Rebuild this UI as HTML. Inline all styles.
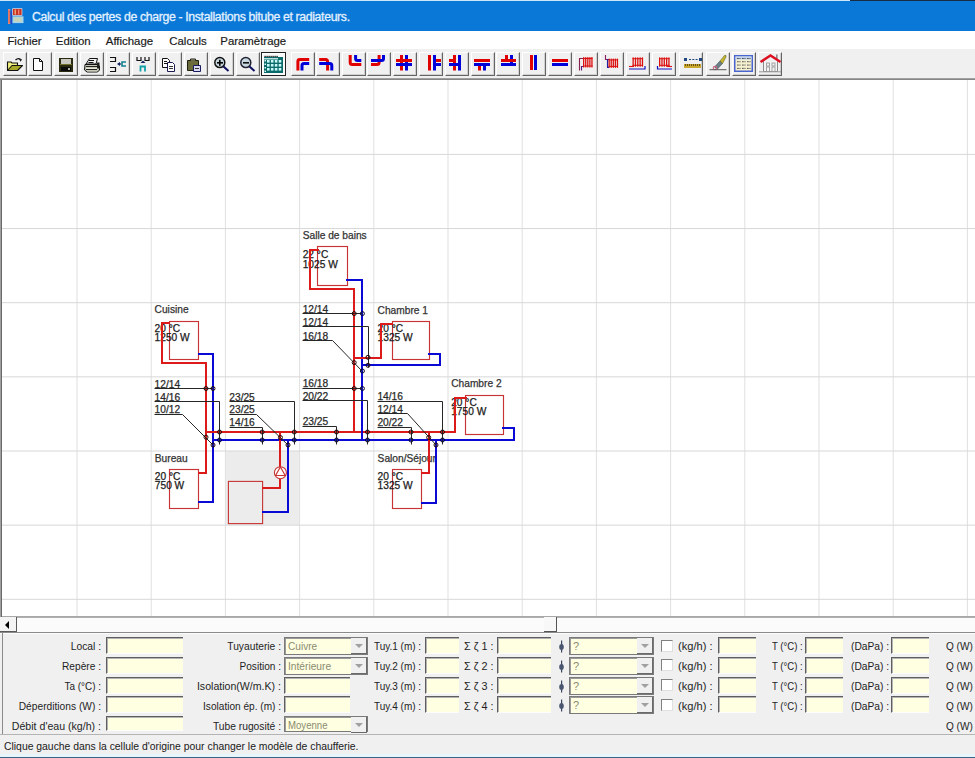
<!DOCTYPE html><html><head><meta charset="utf-8"><title>Calcul</title><style>
*{margin:0;padding:0;box-sizing:border-box}
html,body{width:975px;height:758px;overflow:hidden}body{position:relative;background:#f0f0f0;font-family:"Liberation Sans", sans-serif;color:#1e1e1e}
.a{position:absolute}
.t{position:absolute;white-space:nowrap;line-height:1}
.btn{position:absolute;top:52px;width:24px;height:24px;background:#f0f0f0;border-top:1px solid #fff;border-left:1px solid #fff;border-right:1px solid #646464;border-bottom:1px solid #646464;box-shadow:inset -1px -1px 0 #d0d0d0}
.inp{position:absolute;height:17px;background:#ffffe1;border-top:1px solid #5e5e5e;border-left:1px solid #5e5e5e;border-bottom:1px solid #fcfcfc;box-shadow:inset 1px 1px 0 #b4b4b4}
.cmb{position:absolute;height:18px;background:#ffffe1;border:1px solid #7a7a7a;box-shadow:inset 1px 1px 0 #9a9a9a}
.cmb i{position:absolute;right:0;top:0;width:16px;height:16px;background:#f0f0f0;border-bottom:1px solid #6a6a6a;border-right:1px solid #6a6a6a}
.cmb i:after{content:"";position:absolute;left:4px;top:6px;border-left:4px solid transparent;border-right:4px solid transparent;border-top:4px solid #a0a0a0}
.cmb b{position:absolute;left:3px;top:3px;font-weight:normal;font-size:11px;color:#8a8a70;line-height:1}
.lb{position:absolute;font-size:11px;line-height:1;white-space:nowrap;color:#1e1e1e}
.lr{text-align:right}
.chk{position:absolute;width:12px;height:12px;background:#fff;border-top:1px solid #808080;border-left:1px solid #808080;border-right:1px solid #e0e0e0;border-bottom:1px solid #e0e0e0}
</style></head><body>
<div class="a" style="left:0;top:0;width:975px;height:31px;background:#0a78d7"></div>
<div class="a" style="left:0;top:0;width:850px;height:1px;background:#cfe6f7"></div>
<div class="a" style="left:850px;top:0;width:125px;height:1px;background:#1a2c40"></div>
<svg class="a" style="left:0;top:0" width="30" height="30" viewBox="0 0 30 30">
<rect x="8" y="9" width="2.2" height="15" fill="#e88878"/><rect x="8.6" y="10" width="1" height="13" fill="#d04838" opacity="0.6"/>
<rect x="10.6" y="11" width="1.4" height="13" fill="#2848c8"/>
<rect x="12.3" y="8.3" width="10" height="7.4" fill="#f0d8d8"/>
<rect x="13" y="9" width="8.6" height="6" fill="#c83424"/><rect x="14.6" y="9.5" width="1.3" height="5" fill="#f4b080"/><rect x="18" y="9.5" width="1.3" height="5" fill="#f08070"/>
<rect x="12.5" y="16.3" width="11" height="6.8" fill="#a8d4e8"/><rect x="14" y="17.4" width="7.5" height="4.2" fill="#c8d4b8"/>
</svg>
<div class="t" style="left:32px;top:11px;font-size:12.3px;letter-spacing:-0.36px;-webkit-text-stroke:0.3px #e2f1ff;color:#e2f1ff">Calcul des pertes de charge - Installations bitube et radiateurs.</div>
<div class="a" style="left:0;top:31px;width:975px;height:18px;background:#fff"></div>
<div class="t" style="left:7.4px;top:36px;font-size:11.4px;-webkit-text-stroke:0.2px #1a1a1a;color:#1a1a1a">Fichier</div>
<div class="t" style="left:55.8px;top:36px;font-size:11.4px;-webkit-text-stroke:0.2px #1a1a1a;color:#1a1a1a">Edition</div>
<div class="t" style="left:105.8px;top:36px;font-size:11.4px;-webkit-text-stroke:0.2px #1a1a1a;color:#1a1a1a">Affichage</div>
<div class="t" style="left:169.3px;top:36px;font-size:11.4px;-webkit-text-stroke:0.2px #1a1a1a;color:#1a1a1a">Calculs</div>
<div class="t" style="left:220.3px;top:36px;font-size:11.4px;-webkit-text-stroke:0.2px #1a1a1a;color:#1a1a1a">Paramètrage</div>
<div class="a" style="left:0;top:49px;width:975px;height:29px;background:#f0f0f0"></div>
<div class="a" style="left:0;top:78px;width:975px;height:1px;background:#a0a0a0"></div>
<div class="a" style="left:0;top:79px;width:975px;height:1px;background:#868686"></div>
<div class="btn" style="left:3px"></div>
<div class="btn" style="left:28px"></div>
<div class="btn" style="left:54px"></div>
<div class="btn" style="left:80px"></div>
<div class="btn" style="left:105.5px"></div>
<div class="btn" style="left:131.5px"></div>
<div class="btn" style="left:157.5px"></div>
<div class="btn" style="left:184px"></div>
<div class="btn" style="left:210px"></div>
<div class="btn" style="left:236px"></div>
<div class="a" style="left:261px;top:52px;width:25px;height:24px;background:#fafafa;border:1px solid #222;box-shadow:inset 1px 1px 0 #fff"></div>
<div class="btn" style="left:291px"></div>
<div class="btn" style="left:316px"></div>
<div class="btn" style="left:342px"></div>
<div class="btn" style="left:367px"></div>
<div class="btn" style="left:393px"></div>
<div class="btn" style="left:419px"></div>
<div class="btn" style="left:444.5px"></div>
<div class="btn" style="left:470.5px"></div>
<div class="btn" style="left:496px"></div>
<div class="btn" style="left:522px"></div>
<div class="btn" style="left:548px"></div>
<div class="btn" style="left:574px"></div>
<div class="btn" style="left:600px"></div>
<div class="btn" style="left:625.5px"></div>
<div class="btn" style="left:651.5px"></div>
<div class="btn" style="left:679px"></div>
<div class="btn" style="left:706px"></div>
<div class="btn" style="left:732px"></div>
<div class="btn" style="left:758px"></div>
<svg class="a" style="left:0;top:0" width="975" height="80" viewBox="0 0 975 80"><path d="M7.5,70.5 V62 h3.5 l1,1 h5.5 v2.5" fill="#f0f080" stroke="#111" stroke-width="1.1"/><path d="M7.5,70.5 L12,65.5 H22.5 L17.5,70.5 Z" fill="#a8a828" stroke="#111" stroke-width="1.1" stroke-linejoin="round"/><path d="M15.5,60 q2.5,-2.5 5,-0.8" fill="none" stroke="#111" stroke-width="1.2"/><path d="M19,59 l3,0.3 l-1.3,2.4 z" fill="#111"/><path d="M33.5,58.5 h6 l3,3 v9 h-9 z" fill="#fff" stroke="#111" stroke-width="1"/><path d="M39.5,58.5 v3 h3" fill="none" stroke="#111" stroke-width="1"/><rect x="59" y="58" width="14" height="14" fill="#2a2a10"/><rect x="61" y="59" width="10" height="5" fill="#c8c8c0"/><rect x="60" y="64" width="12" height="1" fill="#70702a"/><rect x="61" y="67" width="10" height="4" fill="#0a0a0a"/><rect x="68" y="68" width="2" height="2" fill="#b0b0a0"/><path d="M89.5,58.5 H97.5 L96,64 H86 Z" fill="#f4f4f4" stroke="#111" stroke-width="1"/><rect x="89" y="60" width="5" height="1" fill="#111"/><rect x="88.5" y="62" width="5" height="1" fill="#111"/><path d="M85,64.5 H97 L99.5,66 V70 L97.5,72 H87 L84.5,70 Z" fill="#c8c8b8" stroke="#111" stroke-width="1"/><rect x="86" y="66" width="11" height="1.2" fill="#202020"/><rect x="86" y="67.5" width="11" height="1.5" fill="#e8e8d8"/><rect x="86" y="69" width="11" height="1" fill="#202020"/><rect x="87" y="70.5" width="10" height="1" fill="#d0d0c0"/><rect x="97" y="62.5" width="2.5" height="6" fill="#202020"/><path d="M110,57.5 h5.5 v4 h-5.5 M110,67.5 h5.5 v4 h-5.5" fill="none" stroke="#111" stroke-width="1.2"/><path d="M117,64 l3,-2 v4 z" fill="#102060"/><rect x="119" y="63.4" width="2" height="1.2" fill="#102060"/><path d="M126,62 h-4 v4 h4" fill="none" stroke="#108090" stroke-width="1.6"/><path d="M137,57 v3.5 h4 v-3.5 M145,57 v3.5 h4 v-3.5" fill="none" stroke="#111" stroke-width="1.2"/><path d="M143,60.5 l2.5,2.5 h-5 z" fill="#102060"/><path d="M140.5,71.5 v-5 h4.5 v5" fill="none" stroke="#10a0a8" stroke-width="1.8"/><path d="M162.5,58.5 h5 l2,2 v7 h-7 z" fill="#fff" stroke="#111" stroke-width="1"/><path d="M167.5,62.5 h5 l2,2 v7 h-7 z" fill="#fff" stroke="#1a1a50" stroke-width="1"/><rect x="164" y="61" width="3" height="1" fill="#111"/><rect x="164" y="63" width="4" height="1" fill="#111"/><rect x="169" y="66" width="4" height="1" fill="#333"/><rect x="169" y="68" width="4" height="1" fill="#333"/><path d="M187.5,60.5 h11 v10 h-11 z" fill="#6a6a3a" stroke="#202010" stroke-width="1"/><path d="M190.5,60.5 v-1.5 h5 v1.5" fill="#b0b090" stroke="#202010" stroke-width="1"/><path d="M193.5,65.5 h7 v6 h-7 z" fill="#d8d8f0" stroke="#1a1a60" stroke-width="1"/><rect x="195" y="68" width="4" height="1" fill="#333"/><circle cx="219.8" cy="62.6" r="5" fill="#c8d8e0" stroke="#111" stroke-width="1.5"/><path d="M223.5,66.5 l5,4.5" stroke="#101060" stroke-width="2"/><rect x="217" y="62" width="6" height="1.6" fill="#000"/><rect x="219" y="59.8" width="1.6" height="6" fill="#000"/><circle cx="245.8" cy="62.6" r="5" fill="#c8d8e0" stroke="#223" stroke-width="1.5"/><path d="M249.5,66.5 l5,4.5" stroke="#101060" stroke-width="2"/><rect x="243" y="62" width="6" height="1.6" fill="#111"/><rect x="264" y="57" width="19" height="16" fill="#0a6a6a"/><rect x="264" y="55.5" width="15" height="1.2" fill="#fff"/><rect x="264.5" y="55.8" width="1.2" height="1.2" fill="#000"/><rect x="266.5" y="55.8" width="1.2" height="1.2" fill="#000"/><rect x="268.5" y="55.8" width="1.2" height="1.2" fill="#000"/><rect x="270.5" y="55.8" width="1.2" height="1.2" fill="#000"/><rect x="272.5" y="55.8" width="1.2" height="1.2" fill="#000"/><rect x="274.5" y="55.8" width="1.2" height="1.2" fill="#000"/><rect x="276.5" y="55.8" width="1.2" height="1.2" fill="#000"/><rect x="264" y="58" width="14" height="1.5" fill="#b8e0e0"/><rect x="267.0" y="60" width="2.6" height="2.6" fill="#c8fafa"/><rect x="270.9" y="60" width="2.6" height="2.6" fill="#c8fafa"/><rect x="274.8" y="60" width="2.6" height="2.6" fill="#c8fafa"/><rect x="278.7" y="60" width="2.6" height="2.6" fill="#c8fafa"/><rect x="267.0" y="64" width="2.6" height="2.6" fill="#c8fafa"/><rect x="270.9" y="64" width="2.6" height="2.6" fill="#c8fafa"/><rect x="274.8" y="64" width="2.6" height="2.6" fill="#c8fafa"/><rect x="278.7" y="64" width="2.6" height="2.6" fill="#c8fafa"/><rect x="267.0" y="68" width="2.6" height="2.6" fill="#c8fafa"/><rect x="270.9" y="68" width="2.6" height="2.6" fill="#c8fafa"/><rect x="274.8" y="68" width="2.6" height="2.6" fill="#c8fafa"/><rect x="278.7" y="68" width="2.6" height="2.6" fill="#c8fafa"/><rect x="264.5" y="60.0" width="1.5" height="1.5" fill="#e0f8f8"/><rect x="264.5" y="63.5" width="1.5" height="1.5" fill="#e0f8f8"/><rect x="264.5" y="67.0" width="1.5" height="1.5" fill="#e0f8f8"/><rect x="264.5" y="70.5" width="1.5" height="1.5" fill="#e0f8f8"/><path d="M297.9,70.5 V61.5 Q297.9,59.6 299.8,59.6 H309.2" fill="none" stroke="#e00000" stroke-width="3" stroke-linejoin="miter"/><path d="M302,70.5 V65.5 Q302,63.5 304,63.5 H309.2" fill="none" stroke="#0000d8" stroke-width="3" stroke-linejoin="miter"/><path d="M319.2,59.6 H325.5 Q327.6,59.6 327.6,61.7 V70.5" fill="none" stroke="#e00000" stroke-width="3" stroke-linejoin="miter"/><path d="M319.2,63.5 H329.8 Q331.8,63.5 331.8,65.5 V70.5" fill="none" stroke="#0000d8" stroke-width="3" stroke-linejoin="miter"/><path d="M350.2,55 V62.5 Q350.2,64.6 352.3,64.6 H361.3" fill="none" stroke="#e00000" stroke-width="3" stroke-linejoin="miter"/><path d="M355.6,55 V58.5 Q355.6,60.5 357.6,60.5 H361.3" fill="none" stroke="#0000d8" stroke-width="3" stroke-linejoin="miter"/><path d="M371,64.6 H377 Q379.1,64.6 379.1,62.5 V55" fill="none" stroke="#e00000" stroke-width="3" stroke-linejoin="miter"/><path d="M371,60.5 H381.5 Q383.5,60.5 383.5,58.5 V55" fill="none" stroke="#0000d8" stroke-width="3" stroke-linejoin="miter"/><path d="M401.5,55 V70.5" fill="none" stroke="#e00000" stroke-width="3" stroke-linejoin="miter"/><path d="M406.5,55 V70.5" fill="none" stroke="#0000d8" stroke-width="3" stroke-linejoin="miter"/><path d="M396,60.5 H412" fill="none" stroke="#e00000" stroke-width="3" stroke-linejoin="miter"/><path d="M396,64.5 H412" fill="none" stroke="#0000d8" stroke-width="3" stroke-linejoin="miter"/><path d="M429.5,55 V70.5" fill="none" stroke="#e00000" stroke-width="3" stroke-linejoin="miter"/><path d="M434.5,55 V70.5" fill="none" stroke="#0000d8" stroke-width="3" stroke-linejoin="miter"/><path d="M436,60.5 H441" fill="none" stroke="#e00000" stroke-width="3" stroke-linejoin="miter"/><path d="M436,64.5 H441" fill="none" stroke="#0000d8" stroke-width="3" stroke-linejoin="miter"/><path d="M449,60.5 H455" fill="none" stroke="#e00000" stroke-width="3" stroke-linejoin="miter"/><path d="M454.5,55 V70.5" fill="none" stroke="#e00000" stroke-width="3" stroke-linejoin="miter"/><path d="M449,64.5 H460" fill="none" stroke="#0000d8" stroke-width="3" stroke-linejoin="miter"/><path d="M459.5,55 V70.5" fill="none" stroke="#0000d8" stroke-width="3" stroke-linejoin="miter"/><path d="M474,60.5 H490" fill="none" stroke="#e00000" stroke-width="3" stroke-linejoin="miter"/><path d="M474,64.5 H490" fill="none" stroke="#0000d8" stroke-width="3" stroke-linejoin="miter"/><path d="M479.5,66 V70.5" fill="none" stroke="#e00000" stroke-width="3" stroke-linejoin="miter"/><path d="M484.5,66 V70.5" fill="none" stroke="#0000d8" stroke-width="3" stroke-linejoin="miter"/><path d="M506.5,55 V59" fill="none" stroke="#e00000" stroke-width="3" stroke-linejoin="miter"/><path d="M511.5,55 V63" fill="none" stroke="#0000d8" stroke-width="3" stroke-linejoin="miter"/><path d="M501,60.5 H516" fill="none" stroke="#e00000" stroke-width="3" stroke-linejoin="miter"/><path d="M501,64.5 H516" fill="none" stroke="#0000d8" stroke-width="3" stroke-linejoin="miter"/><path d="M531.5,55 V70" fill="none" stroke="#e00000" stroke-width="3" stroke-linejoin="miter"/><path d="M535.5,55 V70" fill="none" stroke="#0000d8" stroke-width="3" stroke-linejoin="miter"/><path d="M552,60.5 H568" fill="none" stroke="#e00000" stroke-width="3" stroke-linejoin="miter"/><path d="M552,64.5 H568" fill="none" stroke="#0000d8" stroke-width="3" stroke-linejoin="miter"/><rect x="583.00" y="57" width="1.3" height="10.5" rx="0.6" fill="#dc1010"/><rect x="585.08" y="57" width="1.3" height="10.5" rx="0.6" fill="#dc1010"/><rect x="587.15" y="57" width="1.3" height="10.5" rx="0.6" fill="#dc1010"/><rect x="589.23" y="57" width="1.3" height="10.5" rx="0.6" fill="#dc1010"/><rect x="591.30" y="57" width="1.3" height="10.5" rx="0.6" fill="#dc1010"/><rect x="583" y="58" width="9.5" height="1" fill="#dc1010"/><rect x="583" y="65.5" width="9.5" height="1" fill="#dc1010"/><path d="M583,58.5 H579.5 V70.5" fill="none" stroke="#8a2050" stroke-width="1.1"/><path d="M583,66.5 H581.5 V70.5" fill="none" stroke="#502080" stroke-width="1.1"/><rect x="608.50" y="58.4" width="1.3" height="9.5" rx="0.6" fill="#dc1010"/><rect x="610.58" y="58.4" width="1.3" height="9.5" rx="0.6" fill="#dc1010"/><rect x="612.65" y="58.4" width="1.3" height="9.5" rx="0.6" fill="#dc1010"/><rect x="614.73" y="58.4" width="1.3" height="9.5" rx="0.6" fill="#dc1010"/><rect x="616.80" y="58.4" width="1.3" height="9.5" rx="0.6" fill="#dc1010"/><rect x="608.5" y="59.4" width="9.5" height="1" fill="#dc1010"/><rect x="608.5" y="65.9" width="9.5" height="1" fill="#dc1010"/><path d="M605.5,55 V59.5 H609" fill="none" stroke="#8a2060" stroke-width="1.1"/><path d="M607.5,59 V67.5 H609" fill="none" stroke="#2020a0" stroke-width="1.1"/><rect x="632.50" y="57.2" width="1.3" height="9.6" rx="0.6" fill="#dc1010"/><rect x="634.83" y="57.2" width="1.3" height="9.6" rx="0.6" fill="#dc1010"/><rect x="637.15" y="57.2" width="1.3" height="9.6" rx="0.6" fill="#dc1010"/><rect x="639.48" y="57.2" width="1.3" height="9.6" rx="0.6" fill="#dc1010"/><rect x="641.80" y="57.2" width="1.3" height="9.6" rx="0.6" fill="#dc1010"/><rect x="632.5" y="58.2" width="10.5" height="1" fill="#dc1010"/><rect x="632.5" y="64.8" width="10.5" height="1" fill="#dc1010"/><path d="M629,66.5 H634" stroke="#dc1010" stroke-width="1.1" fill="none"/><path d="M629,69 H645 V66" stroke="#1010c0" stroke-width="1.2" fill="none"/><rect x="659.00" y="57.2" width="1.3" height="9.6" rx="0.6" fill="#dc1010"/><rect x="661.33" y="57.2" width="1.3" height="9.6" rx="0.6" fill="#dc1010"/><rect x="663.65" y="57.2" width="1.3" height="9.6" rx="0.6" fill="#dc1010"/><rect x="665.98" y="57.2" width="1.3" height="9.6" rx="0.6" fill="#dc1010"/><rect x="668.30" y="57.2" width="1.3" height="9.6" rx="0.6" fill="#dc1010"/><rect x="659" y="58.2" width="10.5" height="1" fill="#dc1010"/><rect x="659" y="64.8" width="10.5" height="1" fill="#dc1010"/><path d="M667,66.5 H672" stroke="#dc1010" stroke-width="1.1" fill="none"/><path d="M657.5,66 V69 H672" stroke="#1010c0" stroke-width="1.2" fill="none"/><rect x="684" y="58" width="3" height="3" fill="#204880"/><rect x="699" y="58" width="3" height="3" fill="#204880"/><rect x="689.0" y="59" width="2" height="1" fill="#204880"/><rect x="692.3" y="59" width="2" height="1" fill="#204880"/><rect x="695.6" y="59" width="2" height="1" fill="#204880"/><rect x="684" y="64" width="17" height="4" fill="#c8a830"/><rect x="685" y="64" width="1" height="2" fill="#6a5010"/><rect x="687" y="64" width="1" height="2" fill="#6a5010"/><rect x="689" y="64" width="1" height="2" fill="#6a5010"/><rect x="691" y="64" width="1" height="2" fill="#6a5010"/><rect x="693" y="64" width="1" height="2" fill="#6a5010"/><rect x="695" y="64" width="1" height="2" fill="#6a5010"/><rect x="697" y="64" width="1" height="2" fill="#6a5010"/><rect x="699" y="64" width="1" height="2" fill="#6a5010"/><path d="M714.5,67 L720,61 L722.5,63.5 L717,69.5 z" fill="#6a8088" stroke="#404848" stroke-width="0.6"/><path d="M720,61 L724.5,55.5 L726,55.5 L726,57 L722.5,63.5 z" fill="#c8b830" stroke="#606020" stroke-width="0.6"/><circle cx="715" cy="68" r="1.8" fill="none" stroke="#d06080" stroke-width="1.1"/><rect x="709.5" y="69.2" width="17" height="1" fill="#585858"/><rect x="734" y="55" width="19" height="17" fill="#4a64d0"/><rect x="735.5" y="56.5" width="16" height="14" fill="#f4f0d0"/><rect x="735.5" y="56.5" width="16" height="3" fill="#c0d4f0"/><rect x="737.0" y="58.0" width="0.9" height="0.9" fill="#333"/><rect x="738.3" y="58.0" width="0.9" height="0.9" fill="#333"/><rect x="739.6" y="58.0" width="0.9" height="0.9" fill="#333"/><rect x="742.0" y="58.0" width="0.9" height="0.9" fill="#333"/><rect x="743.3" y="58.0" width="0.9" height="0.9" fill="#333"/><rect x="744.6" y="58.0" width="0.9" height="0.9" fill="#333"/><rect x="747.0" y="58.0" width="0.9" height="0.9" fill="#333"/><rect x="748.3" y="58.0" width="0.9" height="0.9" fill="#333"/><rect x="749.6" y="58.0" width="0.9" height="0.9" fill="#333"/><rect x="737.0" y="61.3" width="0.9" height="0.9" fill="#333"/><rect x="738.3" y="61.3" width="0.9" height="0.9" fill="#333"/><rect x="739.6" y="61.3" width="0.9" height="0.9" fill="#333"/><rect x="742.0" y="61.3" width="0.9" height="0.9" fill="#333"/><rect x="743.3" y="61.3" width="0.9" height="0.9" fill="#333"/><rect x="744.6" y="61.3" width="0.9" height="0.9" fill="#333"/><rect x="747.0" y="61.3" width="0.9" height="0.9" fill="#333"/><rect x="748.3" y="61.3" width="0.9" height="0.9" fill="#333"/><rect x="749.6" y="61.3" width="0.9" height="0.9" fill="#333"/><rect x="737.0" y="64.6" width="0.9" height="0.9" fill="#333"/><rect x="738.3" y="64.6" width="0.9" height="0.9" fill="#333"/><rect x="739.6" y="64.6" width="0.9" height="0.9" fill="#333"/><rect x="742.0" y="64.6" width="0.9" height="0.9" fill="#333"/><rect x="743.3" y="64.6" width="0.9" height="0.9" fill="#333"/><rect x="744.6" y="64.6" width="0.9" height="0.9" fill="#333"/><rect x="747.0" y="64.6" width="0.9" height="0.9" fill="#333"/><rect x="748.3" y="64.6" width="0.9" height="0.9" fill="#333"/><rect x="749.6" y="64.6" width="0.9" height="0.9" fill="#333"/><rect x="737.0" y="67.9" width="0.9" height="0.9" fill="#333"/><rect x="738.3" y="67.9" width="0.9" height="0.9" fill="#333"/><rect x="739.6" y="67.9" width="0.9" height="0.9" fill="#333"/><rect x="742.0" y="67.9" width="0.9" height="0.9" fill="#333"/><rect x="743.3" y="67.9" width="0.9" height="0.9" fill="#333"/><rect x="744.6" y="67.9" width="0.9" height="0.9" fill="#333"/><rect x="747.0" y="67.9" width="0.9" height="0.9" fill="#333"/><rect x="748.3" y="67.9" width="0.9" height="0.9" fill="#333"/><rect x="749.6" y="67.9" width="0.9" height="0.9" fill="#333"/><path d="M763.5,61 V71.5 H777.5 V61" fill="#f4f4f4" stroke="#8a8a8a" stroke-width="1"/><rect x="776" y="54.5" width="1.6" height="4.5" fill="#8a8a8a"/><path d="M760.5,62 L770.5,55.5 L780.5,62" fill="none" stroke="#dc1020" stroke-width="2.4"/><rect x="766.5" y="63.0" width="3" height="3" fill="none" stroke="#9a9a9a" stroke-width="0.9"/><rect x="772.0" y="63.0" width="3" height="3" fill="none" stroke="#9a9a9a" stroke-width="0.9"/><rect x="766.5" y="67.0" width="3" height="4.5" fill="none" stroke="#9a9a9a" stroke-width="0.9"/><rect x="772.0" y="67.0" width="3" height="4.5" fill="none" stroke="#9a9a9a" stroke-width="0.9"/><rect x="759" y="71.3" width="22" height="1" fill="#9a9a9a"/></svg>
<div class="a" style="left:0;top:80px;width:1px;height:537px;background:#a0a0a0"></div>
<div class="a" style="left:1px;top:80px;width:1px;height:537px;background:#6a6a6a"></div>
<div class="a" style="left:2px;top:80px;width:973px;height:536px;background:#fff"></div>
<div class="a" style="left:2px;top:616px;width:973px;height:1px;background:#a8a8a8"></div>
<svg class="a" style="left:0;top:0" width="975" height="617" viewBox="0 0 975 617"><defs><clipPath id="cv"><rect x="2" y="80" width="973" height="536"/></clipPath></defs><g clip-path="url(#cv)" font-family="Liberation Sans, sans-serif"><rect x="225.4" y="451" width="74.2" height="74.2" fill="#ececec"/><rect x="76.50" y="80" width="1" height="536" fill="#e0e0e0"/><rect x="150.70" y="80" width="1" height="536" fill="#e0e0e0"/><rect x="224.90" y="80" width="1" height="536" fill="#e0e0e0"/><rect x="299.10" y="80" width="1" height="536" fill="#e0e0e0"/><rect x="373.30" y="80" width="1" height="536" fill="#e0e0e0"/><rect x="447.50" y="80" width="1" height="536" fill="#e0e0e0"/><rect x="521.70" y="80" width="1" height="536" fill="#e0e0e0"/><rect x="595.90" y="80" width="1" height="536" fill="#e0e0e0"/><rect x="670.10" y="80" width="1" height="536" fill="#e0e0e0"/><rect x="744.30" y="80" width="1" height="536" fill="#e0e0e0"/><rect x="818.50" y="80" width="1" height="536" fill="#e0e0e0"/><rect x="892.70" y="80" width="1" height="536" fill="#e0e0e0"/><rect x="966.90" y="80" width="1" height="536" fill="#e0e0e0"/><rect x="2" y="153.90" width="973" height="1" fill="#d8d8d8"/><rect x="2" y="228.05" width="973" height="1" fill="#d8d8d8"/><rect x="2" y="302.20" width="973" height="1" fill="#d8d8d8"/><rect x="2" y="376.35" width="973" height="1" fill="#d8d8d8"/><rect x="2" y="450.50" width="973" height="1" fill="#d8d8d8"/><rect x="2" y="524.65" width="973" height="1" fill="#d8d8d8"/><rect x="2" y="598.80" width="973" height="1" fill="#d8d8d8"/><rect x="228.4" y="481.4" width="34.2" height="42.2" fill="#ececec" stroke="#c83434" stroke-width="1.1"/><rect x="169.5" y="321.5" width="29.0" height="38.0" fill="none" stroke="#c83434" stroke-width="1.15"/><rect x="169.5" y="469.5" width="29.0" height="39.0" fill="none" stroke="#c83434" stroke-width="1.15"/><rect x="317.5" y="246.5" width="30.0" height="39.0" fill="none" stroke="#c83434" stroke-width="1.15"/><rect x="392.5" y="321.5" width="37.0" height="38.0" fill="none" stroke="#c83434" stroke-width="1.15"/><rect x="465.5" y="395.5" width="38.0" height="39.0" fill="none" stroke="#c83434" stroke-width="1.15"/><rect x="392.5" y="469.5" width="29.0" height="39.0" fill="none" stroke="#c83434" stroke-width="1.15"/><text x="154.6" y="313.3" font-size="10.2" fill="#333" stroke="#333" stroke-width="0.25">Cuisine</text><text x="154.6" y="331.8" font-size="10.2" fill="#1a1a1a" stroke="#1a1a1a" stroke-width="0.25">20 °C</text><text x="154.6" y="341.1" font-size="10.2" fill="#1a1a1a" stroke="#1a1a1a" stroke-width="0.25">1250 W</text><text x="154.8" y="461.9" font-size="10.2" fill="#333" stroke="#333" stroke-width="0.25">Bureau</text><text x="154.8" y="479.8" font-size="10.2" fill="#1a1a1a" stroke="#1a1a1a" stroke-width="0.25">20 °C</text><text x="154.8" y="488.9" font-size="10.2" fill="#1a1a1a" stroke="#1a1a1a" stroke-width="0.25">750 W</text><text x="302.7" y="239.1" font-size="10.2" fill="#333" stroke="#333" stroke-width="0.25">Salle de bains</text><text x="302.7" y="258.3" font-size="10.2" fill="#1a1a1a" stroke="#1a1a1a" stroke-width="0.25">22 °C</text><text x="302.7" y="267.5" font-size="10.2" fill="#1a1a1a" stroke="#1a1a1a" stroke-width="0.25">1025 W</text><text x="377.6" y="313.5" font-size="10.2" fill="#333" stroke="#333" stroke-width="0.25">Chambre 1</text><text x="377.6" y="332.0" font-size="10.2" fill="#1a1a1a" stroke="#1a1a1a" stroke-width="0.25">20 °C</text><text x="377.6" y="341.3" font-size="10.2" fill="#1a1a1a" stroke="#1a1a1a" stroke-width="0.25">1325 W</text><text x="451.2" y="386.9" font-size="10.2" fill="#333" stroke="#333" stroke-width="0.25">Chambre 2</text><text x="451.2" y="405.5" font-size="10.2" fill="#1a1a1a" stroke="#1a1a1a" stroke-width="0.25">20 °C</text><text x="451.2" y="414.7" font-size="10.2" fill="#1a1a1a" stroke="#1a1a1a" stroke-width="0.25">1750 W</text><text x="377.6" y="461.6" font-size="10.2" fill="#333" stroke="#333" stroke-width="0.25">Salon/Séjour</text><text x="377.6" y="479.8" font-size="10.2" fill="#1a1a1a" stroke="#1a1a1a" stroke-width="0.25">20 °C</text><text x="377.6" y="488.7" font-size="10.2" fill="#1a1a1a" stroke="#1a1a1a" stroke-width="0.25">1325 W</text><path d="M169,323 H162 V363 H206 V473 H199" fill="none" stroke="#dc1a1a" stroke-width="2" stroke-linejoin="miter" stroke-linecap="square"/><path d="M199,354 H213 V502 H199" fill="none" stroke="#0a0ad4" stroke-width="2" stroke-linejoin="miter" stroke-linecap="square"/><path d="M206,432 H455 V398 H466" fill="none" stroke="#dc1a1a" stroke-width="2" stroke-linejoin="miter" stroke-linecap="square"/><path d="M213,440 H514 V428 H503" fill="none" stroke="#0a0ad4" stroke-width="2" stroke-linejoin="miter" stroke-linecap="square"/><path d="M263,488 H280 V479" fill="none" stroke="#dc1a1a" stroke-width="2" stroke-linejoin="miter" stroke-linecap="square"/><path d="M280,466 V432" fill="none" stroke="#dc1a1a" stroke-width="2" stroke-linejoin="miter" stroke-linecap="square"/><path d="M263,512 H288 V440" fill="none" stroke="#0a0ad4" stroke-width="2" stroke-linejoin="miter" stroke-linecap="square"/><path d="M318,250 H310 V289 H354 V432" fill="none" stroke="#dc1a1a" stroke-width="2" stroke-linejoin="miter" stroke-linecap="square"/><path d="M347,280 H362 V440" fill="none" stroke="#0a0ad4" stroke-width="2" stroke-linejoin="miter" stroke-linecap="square"/><path d="M392,324 H381 V358 H354" fill="none" stroke="#dc1a1a" stroke-width="2" stroke-linejoin="miter" stroke-linecap="square"/><path d="M429,354 H440 V365 H362" fill="none" stroke="#0a0ad4" stroke-width="2" stroke-linejoin="miter" stroke-linecap="square"/><path d="M422,473 H429 V432" fill="none" stroke="#dc1a1a" stroke-width="2" stroke-linejoin="miter" stroke-linecap="square"/><path d="M422,503 H436 V440" fill="none" stroke="#0a0ad4" stroke-width="2" stroke-linejoin="miter" stroke-linecap="square"/><circle cx="280.4" cy="472.7" r="6" fill="#fff" stroke="#c83434" stroke-width="1.1"/><path d="M280.4,467 L285.2,475.5 H275.6 Z" fill="none" stroke="#c83434" stroke-width="1.15"/><text x="154.6" y="387.6" font-size="10.2" fill="#2a2a2a" stroke="#2a2a2a" stroke-width="0.25">12/14</text><path d="M154.5,388.5 H213.5" fill="none" stroke="#262626" stroke-width="1"/><circle cx="206" cy="388.5" r="2" fill="none" stroke="#200808" stroke-width="1"/><circle cx="213" cy="388.5" r="2" fill="none" stroke="#200808" stroke-width="1"/><text x="154.6" y="400.6" font-size="10.2" fill="#2a2a2a" stroke="#2a2a2a" stroke-width="0.25">14/16</text><path d="M154.5,401.5 H219.5 V444.5" fill="none" stroke="#262626" stroke-width="1"/><circle cx="219.5" cy="432" r="2" fill="none" stroke="#200808" stroke-width="1"/><circle cx="219.5" cy="440" r="2" fill="none" stroke="#080830" stroke-width="1"/><text x="154.6" y="413.3" font-size="10.2" fill="#2a2a2a" stroke="#2a2a2a" stroke-width="0.25">10/12</text><path d="M154.5,414.5 H182.5 L213.5,445.5" fill="none" stroke="#262626" stroke-width="1"/><circle cx="206" cy="437.2" r="2" fill="none" stroke="#200808" stroke-width="1"/><circle cx="213" cy="445" r="2" fill="none" stroke="#200808" stroke-width="1"/><text x="229.3" y="400.6" font-size="10.2" fill="#2a2a2a" stroke="#2a2a2a" stroke-width="0.25">23/25</text><path d="M229.5,401.5 H294.5 V444.5" fill="none" stroke="#262626" stroke-width="1"/><circle cx="294.3" cy="432" r="2" fill="none" stroke="#200808" stroke-width="1"/><circle cx="294.3" cy="440" r="2" fill="none" stroke="#080830" stroke-width="1"/><text x="229.3" y="413.3" font-size="10.2" fill="#2a2a2a" stroke="#2a2a2a" stroke-width="0.25">23/25</text><path d="M229.5,414.5 H256.5 L288.5,445.5" fill="none" stroke="#262626" stroke-width="1"/><circle cx="280.4" cy="437.5" r="2" fill="none" stroke="#200808" stroke-width="1"/><circle cx="288" cy="445" r="2" fill="none" stroke="#200808" stroke-width="1"/><text x="229.3" y="426" font-size="10.2" fill="#2a2a2a" stroke="#2a2a2a" stroke-width="0.25">14/16</text><path d="M229.5,427.5 H262.5 V444.5" fill="none" stroke="#262626" stroke-width="1"/><circle cx="262.2" cy="432" r="2" fill="none" stroke="#200808" stroke-width="1"/><circle cx="262.2" cy="440" r="2" fill="none" stroke="#080830" stroke-width="1"/><text x="302.7" y="313" font-size="10.2" fill="#2a2a2a" stroke="#2a2a2a" stroke-width="0.25">12/14</text><path d="M302.5,313.5 H362.5" fill="none" stroke="#262626" stroke-width="1"/><circle cx="354.2" cy="313.6" r="2" fill="none" stroke="#200808" stroke-width="1"/><circle cx="362.4" cy="313.6" r="2" fill="none" stroke="#080830" stroke-width="1"/><text x="302.7" y="325.6" font-size="10.2" fill="#2a2a2a" stroke="#2a2a2a" stroke-width="0.25">12/14</text><path d="M302.5,326.5 H368.5 V367.5" fill="none" stroke="#262626" stroke-width="1"/><circle cx="368" cy="357.3" r="2" fill="none" stroke="#200808" stroke-width="1"/><circle cx="368" cy="365.3" r="2" fill="none" stroke="#200808" stroke-width="1"/><text x="302.7" y="339.6" font-size="10.2" fill="#2a2a2a" stroke="#2a2a2a" stroke-width="0.25">16/18</text><path d="M302.5,340.5 H332.5 L362.5,371.5" fill="none" stroke="#262626" stroke-width="1"/><circle cx="354.2" cy="362.6" r="2" fill="none" stroke="#200808" stroke-width="1"/><circle cx="362.4" cy="371" r="2" fill="none" stroke="#080830" stroke-width="1"/><text x="302.7" y="387.4" font-size="10.2" fill="#2a2a2a" stroke="#2a2a2a" stroke-width="0.25">16/18</text><path d="M302.5,388.5 H362.5" fill="none" stroke="#262626" stroke-width="1"/><circle cx="354.2" cy="388.5" r="2" fill="none" stroke="#200808" stroke-width="1"/><circle cx="362.4" cy="388.5" r="2" fill="none" stroke="#080830" stroke-width="1"/><text x="302.7" y="400" font-size="10.2" fill="#2a2a2a" stroke="#2a2a2a" stroke-width="0.25">20/22</text><path d="M302.5,400.5 H367.5 V444.5" fill="none" stroke="#262626" stroke-width="1"/><circle cx="367.5" cy="432" r="2" fill="none" stroke="#200808" stroke-width="1"/><circle cx="367.5" cy="440" r="2" fill="none" stroke="#080830" stroke-width="1"/><text x="302.7" y="425.4" font-size="10.2" fill="#2a2a2a" stroke="#2a2a2a" stroke-width="0.25">23/25</text><path d="M302.5,426.5 H336.5 V444.5" fill="none" stroke="#262626" stroke-width="1"/><circle cx="336.5" cy="432" r="2" fill="none" stroke="#200808" stroke-width="1"/><circle cx="336.5" cy="440" r="2" fill="none" stroke="#080830" stroke-width="1"/><text x="377.4" y="400.2" font-size="10.2" fill="#2a2a2a" stroke="#2a2a2a" stroke-width="0.25">14/16</text><path d="M377.5,401.5 H442.5 V444.5" fill="none" stroke="#262626" stroke-width="1"/><circle cx="442.5" cy="432" r="2" fill="none" stroke="#200808" stroke-width="1"/><circle cx="442.5" cy="440" r="2" fill="none" stroke="#080830" stroke-width="1"/><text x="377.4" y="413" font-size="10.2" fill="#2a2a2a" stroke="#2a2a2a" stroke-width="0.25">12/14</text><path d="M377.5,413.5 H407.5 L436.5,445.5" fill="none" stroke="#262626" stroke-width="1"/><circle cx="428.7" cy="437.5" r="2" fill="none" stroke="#200808" stroke-width="1"/><circle cx="436" cy="445" r="2" fill="none" stroke="#200808" stroke-width="1"/><text x="377.4" y="426" font-size="10.2" fill="#2a2a2a" stroke="#2a2a2a" stroke-width="0.25">20/22</text><path d="M377.5,427.5 H411.5 V444.5" fill="none" stroke="#262626" stroke-width="1"/><circle cx="411" cy="432" r="2" fill="none" stroke="#200808" stroke-width="1"/><circle cx="411" cy="440" r="2" fill="none" stroke="#080830" stroke-width="1"/></g></svg>
<div class="a" style="left:0;top:617px;width:975px;height:15px;background:#fbfbfb;border-top:1px solid #b0b0b0"></div>
<div class="a" style="left:0;top:617px;width:17px;height:15px;background:#f4f4f4;border-right:1px solid #5a5a5a;border-bottom:1px solid #5a5a5a"></div>
<div class="a" style="left:5px;top:621px;width:0;height:0;border-top:4px solid transparent;border-bottom:4px solid transparent;border-right:4px solid #000"></div>
<div class="a" style="left:544px;top:617px;width:13px;height:15px;background:#f8f8f8;border-right:1.5px solid #555;border-bottom:1px solid #555"></div>
<div class="a" style="left:0;top:632px;width:975px;height:102px;background:#f0f0f0;border-top:1px solid #8a8a8a"></div>
<div class="a" style="left:0;top:633px;width:975px;height:1px;background:#fcfcfc"></div>
<div class="a" style="left:2px;top:633px;width:1px;height:101px;background:#8a8a8a"></div>
<div class="a" style="left:0;top:734px;width:975px;height:1px;background:#b4b4b4"></div>
<div class="lb" style="left:100.5px;top:641.3px;transform:translateX(-100%) scaleX(0.935);transform-origin:100% 0">Local :</div>
<div class="inp" style="left:105.6px;top:637.0px;width:77px;height:17px"></div>
<div class="lb" style="left:100.5px;top:661.1px;transform:translateX(-100%) scaleX(0.924);transform-origin:100% 0">Repère :</div>
<div class="inp" style="left:105.6px;top:656.8px;width:77px;height:17px"></div>
<div class="lb" style="left:100.5px;top:680.9px;transform:translateX(-100%) scaleX(0.902);transform-origin:100% 0">Ta (°C) :</div>
<div class="inp" style="left:105.6px;top:676.6px;width:77px;height:17px"></div>
<div class="lb" style="left:100.5px;top:700.7px;transform:translateX(-100%) scaleX(0.928);transform-origin:100% 0">Déperditions (W) :</div>
<div class="inp" style="left:105.6px;top:696.4px;width:77px;height:17px"></div>
<div class="lb" style="left:100.5px;top:720.5px;transform:translateX(-100%) scaleX(0.963);transform-origin:100% 0">Débit d'eau (kg/h) :</div>
<div class="inp" style="left:105.6px;top:716.2px;width:77px;height:15px"></div>
<div class="lb" style="left:280.5px;top:641.3px;transform:translateX(-100%) scaleX(0.931);transform-origin:100% 0">Tuyauterie :</div>
<div class="cmb" style="left:283.6px;top:637.0px;width:84.4px;height:18px"><b style="transform:scaleX(0.918);transform-origin:0 0">Cuivre</b><i></i></div>
<div class="lb" style="left:280.5px;top:661.1px;transform:translateX(-100%) scaleX(0.917);transform-origin:100% 0">Position :</div>
<div class="cmb" style="left:283.6px;top:656.8px;width:84.4px;height:18px"><b style="transform:scaleX(0.927);transform-origin:0 0">Intérieure</b><i></i></div>
<div class="lb" style="left:280.5px;top:680.9px;transform:translateX(-100%) scaleX(0.962);transform-origin:100% 0">Isolation(W/m.K) :</div>
<div class="inp" style="left:283.6px;top:676.6px;width:66px"></div>
<div class="lb" style="left:280.5px;top:700.7px;transform:translateX(-100%) scaleX(0.917);transform-origin:100% 0">Isolation ép. (m) :</div>
<div class="inp" style="left:283.6px;top:696.4px;width:66px"></div>
<div class="lb" style="left:280.5px;top:720.5px;transform:translateX(-100%) scaleX(0.933);transform-origin:100% 0">Tube rugosité :</div>
<div class="cmb" style="left:283.6px;top:716.2px;width:84.4px;height:16px"><b style="transform:scaleX(0.873);transform-origin:0 0">Moyenne</b><i></i></div>
<div class="lb" style="left:374.4px;top:641.3px;transform:scaleX(0.907);transform-origin:0 0">Tuy.1 (m) :</div>
<div class="inp" style="left:424.8px;top:637.0px;width:34px"></div>
<div class="lb" style="left:463.7px;top:641.3px;transform:scaleX(0.983);transform-origin:0 0">Σ ζ 1 :</div>
<div class="inp" style="left:497.2px;top:637.0px;width:54.3px"></div>
<svg class="a" style="left:557px;top:640.0px" width="9" height="13" viewBox="0 0 9 13"><rect x="4" y="0.5" width="1.2" height="12" fill="#3a4660"/><ellipse cx="4.5" cy="7" rx="2.3" ry="3" fill="#4a5670"/></svg>
<div class="cmb" style="left:569px;top:637.0px;width:85px"><b>?</b><i></i></div>
<div class="chk" style="left:660.7px;top:639.5px"></div>
<div class="lb" style="left:677.8px;top:641.3px;transform:scaleX(1.008);transform-origin:0 0">(kg/h) :</div>
<div class="inp" style="left:718.2px;top:637.0px;width:38px"></div>
<div class="lb" style="left:771.5px;top:641.3px;transform:scaleX(0.868);transform-origin:0 0">T (°C) :</div>
<div class="inp" style="left:804.7px;top:637.0px;width:38px"></div>
<div class="lb" style="left:850.6px;top:641.3px;transform:scaleX(0.932);transform-origin:0 0">(DaPa) :</div>
<div class="inp" style="left:891px;top:637.0px;width:38px"></div>
<div class="lb" style="left:374.4px;top:661.1px;transform:scaleX(0.907);transform-origin:0 0">Tuy.2 (m) :</div>
<div class="inp" style="left:424.8px;top:656.8px;width:34px"></div>
<div class="lb" style="left:463.7px;top:661.1px;transform:scaleX(0.983);transform-origin:0 0">Σ ζ 2 :</div>
<div class="inp" style="left:497.2px;top:656.8px;width:54.3px"></div>
<svg class="a" style="left:557px;top:659.8px" width="9" height="13" viewBox="0 0 9 13"><rect x="4" y="0.5" width="1.2" height="12" fill="#3a4660"/><ellipse cx="4.5" cy="7" rx="2.3" ry="3" fill="#4a5670"/></svg>
<div class="cmb" style="left:569px;top:656.8px;width:85px"><b>?</b><i></i></div>
<div class="chk" style="left:660.7px;top:659.3px"></div>
<div class="lb" style="left:677.8px;top:661.1px;transform:scaleX(1.008);transform-origin:0 0">(kg/h) :</div>
<div class="inp" style="left:718.2px;top:656.8px;width:38px"></div>
<div class="lb" style="left:771.5px;top:661.1px;transform:scaleX(0.868);transform-origin:0 0">T (°C) :</div>
<div class="inp" style="left:804.7px;top:656.8px;width:38px"></div>
<div class="lb" style="left:850.6px;top:661.1px;transform:scaleX(0.932);transform-origin:0 0">(DaPa) :</div>
<div class="inp" style="left:891px;top:656.8px;width:38px"></div>
<div class="lb" style="left:374.4px;top:680.9px;transform:scaleX(0.907);transform-origin:0 0">Tuy.3 (m) :</div>
<div class="inp" style="left:424.8px;top:676.6px;width:34px"></div>
<div class="lb" style="left:463.7px;top:680.9px;transform:scaleX(0.983);transform-origin:0 0">Σ ζ 3 :</div>
<div class="inp" style="left:497.2px;top:676.6px;width:54.3px"></div>
<svg class="a" style="left:557px;top:679.6px" width="9" height="13" viewBox="0 0 9 13"><rect x="4" y="0.5" width="1.2" height="12" fill="#3a4660"/><ellipse cx="4.5" cy="7" rx="2.3" ry="3" fill="#4a5670"/></svg>
<div class="cmb" style="left:569px;top:676.6px;width:85px"><b>?</b><i></i></div>
<div class="chk" style="left:660.7px;top:679.1px"></div>
<div class="lb" style="left:677.8px;top:680.9px;transform:scaleX(1.008);transform-origin:0 0">(kg/h) :</div>
<div class="inp" style="left:718.2px;top:676.6px;width:38px"></div>
<div class="lb" style="left:771.5px;top:680.9px;transform:scaleX(0.868);transform-origin:0 0">T (°C) :</div>
<div class="inp" style="left:804.7px;top:676.6px;width:38px"></div>
<div class="lb" style="left:850.6px;top:680.9px;transform:scaleX(0.932);transform-origin:0 0">(DaPa) :</div>
<div class="inp" style="left:891px;top:676.6px;width:38px"></div>
<div class="lb" style="left:374.4px;top:700.7px;transform:scaleX(0.907);transform-origin:0 0">Tuy.4 (m) :</div>
<div class="inp" style="left:424.8px;top:696.4px;width:34px"></div>
<div class="lb" style="left:463.7px;top:700.7px;transform:scaleX(0.983);transform-origin:0 0">Σ ζ 4 :</div>
<div class="inp" style="left:497.2px;top:696.4px;width:54.3px"></div>
<svg class="a" style="left:557px;top:699.4px" width="9" height="13" viewBox="0 0 9 13"><rect x="4" y="0.5" width="1.2" height="12" fill="#3a4660"/><ellipse cx="4.5" cy="7" rx="2.3" ry="3" fill="#4a5670"/></svg>
<div class="cmb" style="left:569px;top:696.4px;width:85px"><b>?</b><i></i></div>
<div class="chk" style="left:660.7px;top:698.9px"></div>
<div class="lb" style="left:677.8px;top:700.7px;transform:scaleX(1.008);transform-origin:0 0">(kg/h) :</div>
<div class="inp" style="left:718.2px;top:696.4px;width:38px"></div>
<div class="lb" style="left:771.5px;top:700.7px;transform:scaleX(0.868);transform-origin:0 0">T (°C) :</div>
<div class="inp" style="left:804.7px;top:696.4px;width:38px"></div>
<div class="lb" style="left:850.6px;top:700.7px;transform:scaleX(0.932);transform-origin:0 0">(DaPa) :</div>
<div class="inp" style="left:891px;top:696.4px;width:38px"></div>
<div class="lb" style="left:946px;top:641.3px;transform:scaleX(0.914);transform-origin:0 0">Q (W)</div>
<div class="lb" style="left:946px;top:661.1px;transform:scaleX(0.914);transform-origin:0 0">Q (W)</div>
<div class="lb" style="left:946px;top:680.9px;transform:scaleX(0.914);transform-origin:0 0">Q (W)</div>
<div class="lb" style="left:946px;top:700.7px;transform:scaleX(0.914);transform-origin:0 0">Q (W)</div>
<div class="lb" style="left:946px;top:720.5px;transform:scaleX(0.914);transform-origin:0 0">Q (W)</div>
<div class="t" style="left:3.5px;top:741px;font-size:11px;transform:scaleX(0.944);transform-origin:0 0;color:#1a1a1a">Clique gauche dans la cellule d'origine pour changer le modèle de chaufferie.</div>
<div class="a" style="left:0;top:754px;width:975px;height:3px;background:#e6f6fc"></div>
<div class="a" style="left:0;top:757px;width:975px;height:1px;background:#3c6482"></div>
</body></html>
